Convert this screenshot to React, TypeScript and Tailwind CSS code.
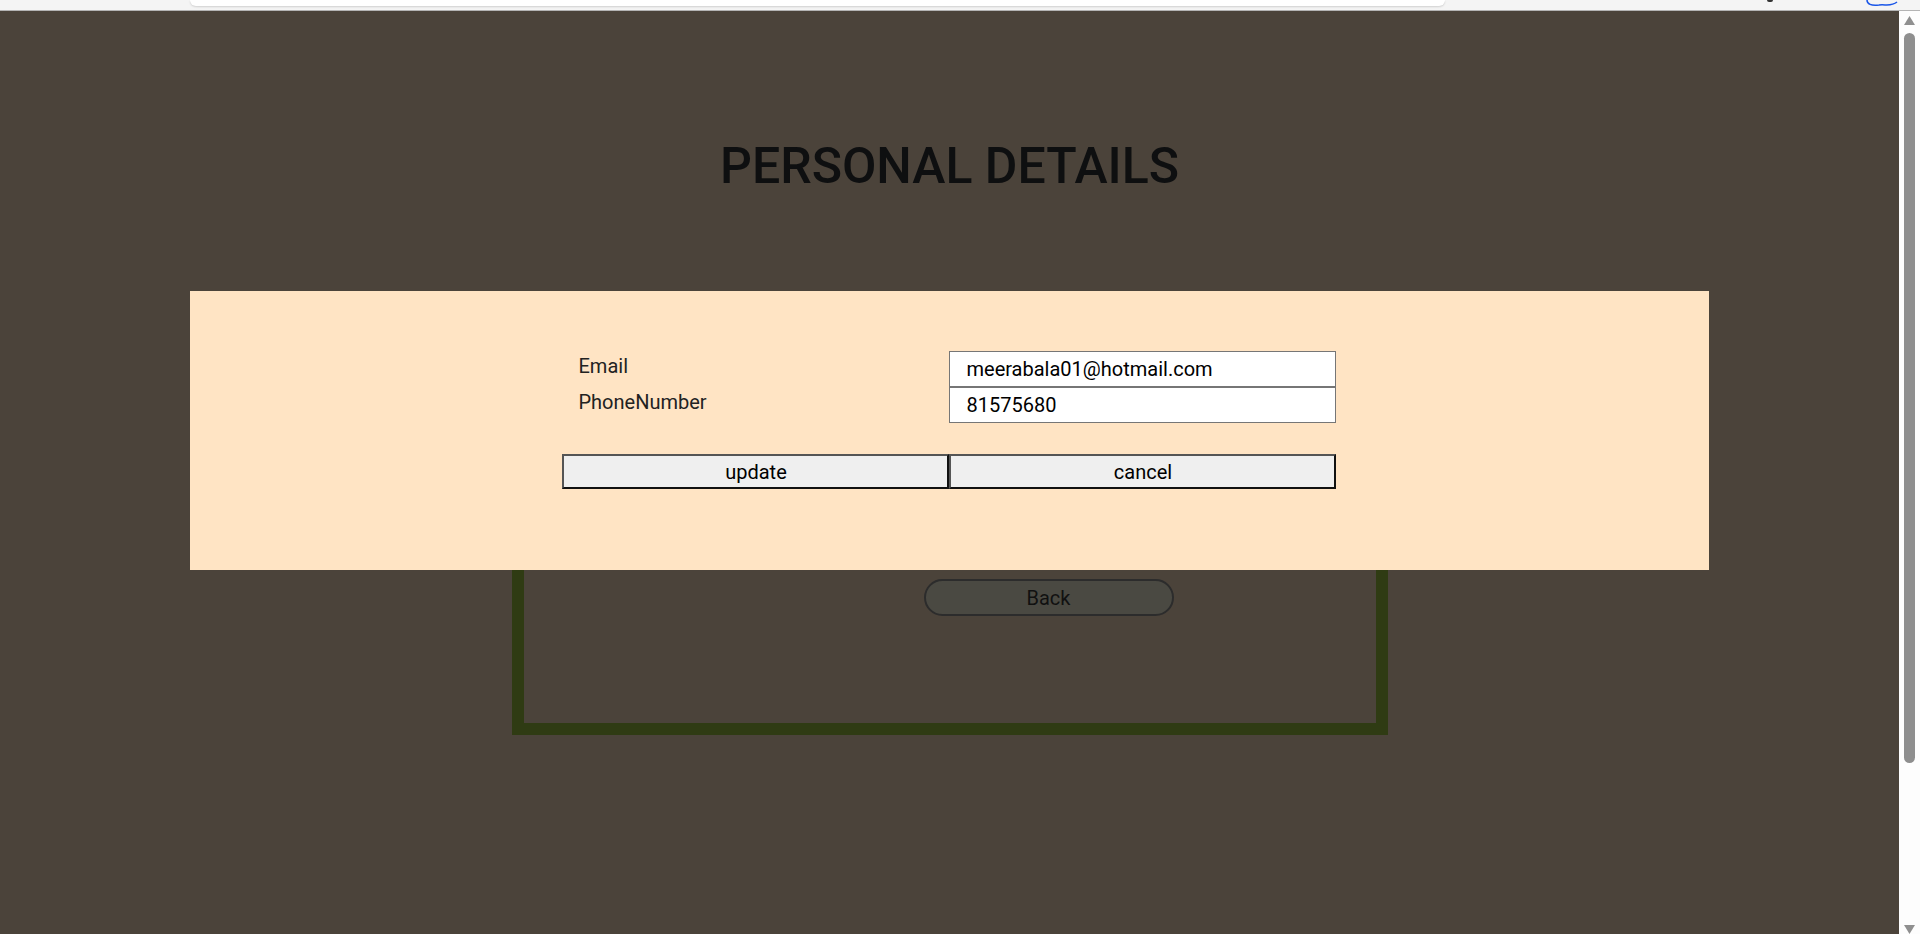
import React from "react";

function TopBar() {
  return (
    <div className="h-[11px] shrink-0 bg-[#f4f4f4] border-b border-[#b4b4b4] flex items-start overflow-hidden">
      <div className="ml-[190px] w-[1255px] h-[6px] bg-white rounded-b-[8px] shadow-[0_1px_2px_rgba(0,0,0,0.15)]" />
      <div className="ml-[322px] w-[6px] h-[2px] bg-[#333] rounded-b-full" />
      <svg className="ml-[92px]" width="36" height="8" viewBox="0 0 36 8">
        <path d="M2 0 C2 4, 6 6, 14 5 C20 4, 26 7, 32 2" fill="none" stroke="#1a56e8" strokeWidth="1.5" />
      </svg>
    </div>
  );
}

function Scrollbar() {
  return (
    <div className="w-[21px] shrink-0 bg-[#fdfdfd] flex flex-col items-center">
      <svg className="mt-[5px]" width="11" height="9" viewBox="0 0 11 9">
        <polygon points="5.5,0 11,9 0,9" fill="#8f8f8f" />
      </svg>
      <div className="mt-[8px] w-[11px] h-[734px] rounded-full bg-[#8e8e8e]" />
      <svg className="mt-[162px]" width="11" height="9" viewBox="0 0 11 9">
        <polygon points="0,0 11,0 5.5,9" fill="#8f8f8f" />
      </svg>
    </div>
  );
}

export default function App() {
  return (
    <div className="w-[1920px] h-[934px] flex flex-col overflow-hidden font-['Roboto',sans-serif]">
      <TopBar />
      <div className="flex flex-1 min-h-0">
        <main className="flex-1 bg-[#4b433a] relative pt-[125px]">
          <h1 className="text-center text-[50px] leading-[60px] font-medium text-[#0e0f10]">
            PERSONAL DETAILS
          </h1>

          <div className="mt-[104px] mx-auto w-[876px] h-[435px] border-[12px] border-[#2f3b13] pt-[267px]">
            <button className="ml-[400px] w-[250px] h-[37px] rounded-full border-2 border-[#2c2c2c] bg-[#4a4942] text-[20px] text-[#111]">
              Back
            </button>
          </div>

          <div className="absolute top-[280px] left-[10%] w-[80%] h-[279px] bg-[#ffe4c4] pt-[60px]">
            <div className="w-[774px] mx-auto">
              <div className="grid grid-cols-[387px_387px]">
                <div className="pl-[16px] pt-[3px] h-[36px] text-[20px] leading-[24px] text-[#222]">Email</div>
                <div className="h-[36px] border border-[#767676] bg-white pl-[16px] flex items-center text-[20px] text-black">
                  meerabala01@hotmail.com
                </div>
                <div className="pl-[16px] pt-[3px] h-[36px] text-[20px] leading-[24px] text-[#222]">PhoneNumber</div>
                <div className="h-[36px] border border-[#767676] bg-white pl-[16px] flex items-center text-[20px] text-black">
                  81575680
                </div>
              </div>
              <div className="mt-[31px] flex">
                <button className="w-[387px] h-[35px] bg-[#efefef] border-2 border-t-[#555] border-l-[#555] border-b-[#111] border-r-[#111] text-[20px] text-black">
                  update
                </button>
                <button className="w-[387px] h-[35px] bg-[#efefef] border-2 border-t-[#555] border-l-[#555] border-b-[#111] border-r-[#111] text-[20px] text-black">
                  cancel
                </button>
              </div>
            </div>
          </div>
        </main>
        <Scrollbar />
      </div>
    </div>
  );
}
